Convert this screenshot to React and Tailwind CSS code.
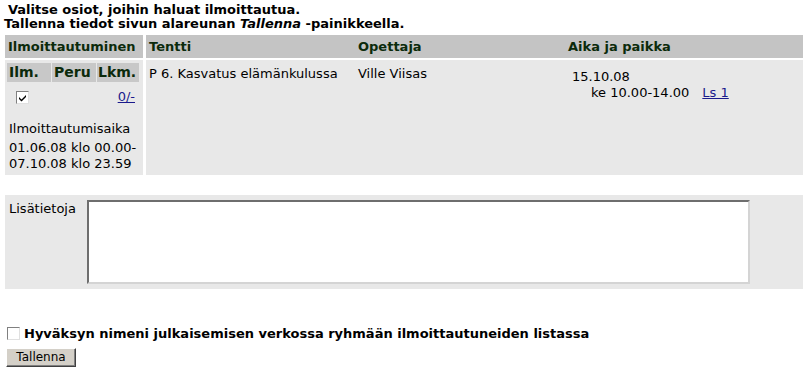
import React from 'react';

const font = { fontFamily: '"DejaVu Sans", Verdana, sans-serif' };

function Check({ checked }) {
    return (
        <span className="inline-flex w-[13px] h-[13px] items-center justify-center border border-t-[#808080] border-l-[#808080] border-b-[#e0e0e0] border-r-[#e0e0e0] bg-white">
            {checked && (
                <svg width="9" height="9" viewBox="0 0 9 9">
                    <path d="M1 4 L3.5 6.5 L8 2 L8 4 L3.5 8.5 L1 6 Z" fill="#000" />
                </svg>
            )}
        </span>
    );
}

export default function App() {
    return (
        <div className="bg-white text-black w-[809px] h-[373px] overflow-hidden" style={font}>
            <div className="pt-[3px] text-[13px] font-bold leading-[14px]">
                <div className="pl-[8px]">Valitse osiot, joihin haluat ilmoittautua.</div>
                <div className="pl-[4px]">
                    Tallenna tiedot sivun alareunan <i>Tallenna</i> -painikkeella.
                </div>
            </div>

            {/* registration table */}
            <div className="ml-[5px] mt-[4px] w-[798px] grid grid-cols-[138px_1fr] gap-x-[3px] gap-y-[2px] text-[13px]">
                <div className="bg-[#c4c4c4] h-[23px] px-[3px] flex items-center font-bold text-[#0b2a0b]">
                    Ilmoittautuminen
                </div>
                <div className="bg-[#c4c4c4] h-[23px] grid grid-cols-[209px_210px_1fr] items-center font-bold text-[#0b2a0b]">
                    <span className="pl-[3px]">Tentti</span>
                    <span className="pl-[3px]">Opettaja</span>
                    <span className="pl-[3px]">Aika ja paikka</span>
                </div>

                <div className="bg-[#e8e8e8] h-[115px] pt-[3px] px-[2px]">
                    <div className="grid grid-cols-[44px_44px_42px] gap-x-[1px] font-bold text-[14px] text-[#0b2a0b]">
                        <span className="bg-[#c8c8c8] h-[19px] flex items-center pl-[2px]">Ilm.</span>
                        <span className="bg-[#c8c8c8] h-[19px] flex items-center pl-[2px]">Peru</span>
                        <span className="bg-[#c8c8c8] h-[19px] flex items-center pl-[1px]">Lkm.</span>
                    </div>
                    <div className="flex justify-between items-center mt-[8px] h-[14px]">
                        <span className="pl-[9px] flex"><Check checked /></span>
                        <a href="#" className="underline text-[#1a1a8c] pr-[6px] leading-[14px]">0/-</a>
                    </div>
                    <div className="pl-[2px] mt-[17px] leading-[16px]">Ilmoittautumisaika</div>
                    <div className="pl-[2px] mt-[3px] leading-[16px]">
                        01.06.08 klo 00.00-
                        <br />
                        07.10.08 klo 23.59
                    </div>
                </div>
                <div className="bg-[#e8e8e8] h-[115px] grid grid-cols-[209px_210px_1fr] items-start pt-[6px] leading-[16px]">
                    <span className="pl-[3px]">P 6. Kasvatus elämänkulussa</span>
                    <span className="pl-[3px]">Ville Viisas</span>
                    <div className="pl-[7px] pt-[3px]">
                        <div>15.10.08</div>
                        <div className="pl-[19px] flex gap-[13px]">
                            <span>ke 10.00-14.00</span>
                            <a href="#" className="underline text-[#1a1a8c]">Ls 1</a>
                        </div>
                    </div>
                </div>
            </div>

            {/* additional info */}
            <div className="ml-[5px] mt-[20px] w-[798px] h-[94px] bg-[#e8e8e8] flex items-start pt-[5px] pl-[4px] text-[13px]">
                <span className="w-[78px] shrink-0 pt-[1px] leading-[16px]">Lisätietoja</span>
                <textarea className="w-[663px] h-[84px] bg-white border-2 border-t-[#6e6e6e] border-l-[#6e6e6e] border-b-[#d4d4d4] border-r-[#d4d4d4] resize-none outline-none" />
            </div>

            <div className="mt-[37px] pl-[7px] flex items-center gap-[4px] text-[13px] font-bold leading-[15px]">
                <Check />
                <span>Hyväksyn nimeni julkaisemisen verkossa ryhmään ilmoittautuneiden listassa</span>
            </div>
            <div className="pl-[6px] mt-[3px]">
                <button className="w-[70px] h-[19px] bg-[#d4d0c8] text-[12px] leading-none border border-t-white border-l-white border-b-[#404040] border-r-[#404040] shadow-[inset_-1px_-1px_0_#808080]">
                    Tallenna
                </button>
            </div>
        </div>
    );
}
